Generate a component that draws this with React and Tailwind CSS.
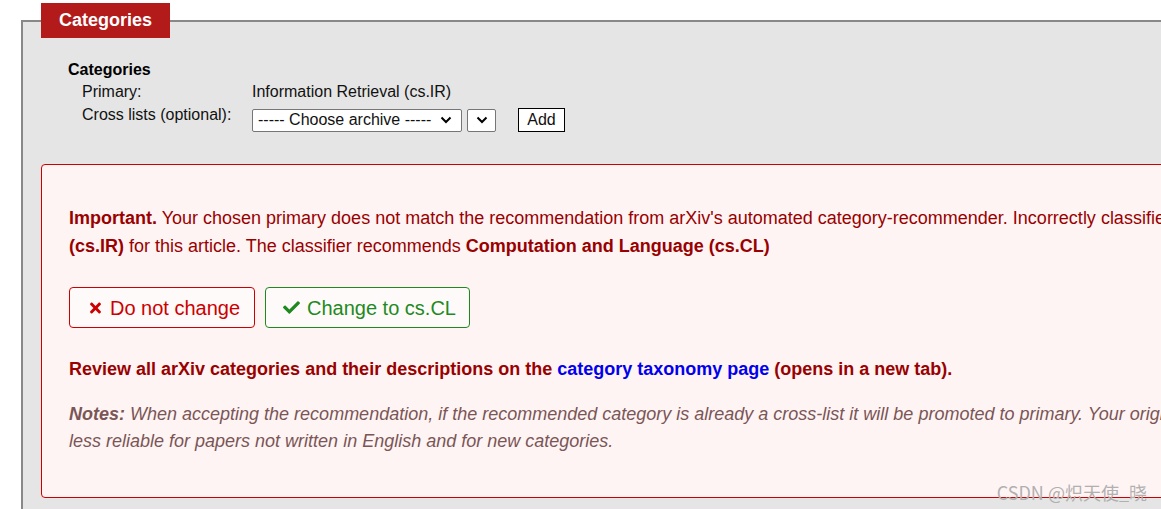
import React from "react";
import { FaTimes, FaCheck } from "react-icons/fa";

function Chevron() {
  return (
    <svg width="12" height="8" viewBox="0 0 12 8" className="shrink-0">
      <path d="M1.5 1.5 L6 6 L10.5 1.5" fill="none" stroke="#000" strokeWidth="2" />
    </svg>
  );
}

export default function App() {
  return (
    <div className="relative w-[1161px] h-[509px] overflow-hidden bg-white font-['Liberation_Sans',Arial,sans-serif] text-black">
      <div className="pl-[21px] pt-[3px]">
        <fieldset className="w-[1220px] h-[560px] border-2 border-[#888] bg-[#e5e5e5] px-[18px]">
          <legend className="ml-0 h-[35px] bg-[#b31b1b] px-[18px] text-[18px] font-bold leading-[35px] text-white">
            Categories
          </legend>

          <div className="pl-[27px] pt-[21px]">
            <div className="text-[16px] font-bold leading-[22px]">Categories</div>
            <div className="pl-[14px] text-[16px] leading-[22px] text-[#111]">
              <div className="flex">
                <div className="w-[170px]">Primary:</div>
                <div>Information Retrieval (cs.IR)</div>
              </div>
              <div className="flex items-start pt-[1px]">
                <div className="w-[170px]">Cross lists (optional):</div>
                <div className="mt-[4px] flex items-center">
                  <div className="flex h-[23px] w-[210px] items-center justify-between rounded-[2px] border border-[#767676] bg-white pl-[5px] pr-[9px] text-[16px] leading-none">
                    <span>----- Choose archive -----</span>
                    <Chevron />
                  </div>
                  <div className="ml-[5px] flex h-[23px] w-[29px] items-center justify-center rounded-[2px] border border-[#767676] bg-white">
                    <Chevron />
                  </div>
                  <button className="ml-[22px] h-[24px] w-[47px] border border-black bg-white text-[16px] leading-none">
                    Add
                  </button>
                </div>
              </div>
            </div>
          </div>

          <div className="mt-[32px] w-[1300px] rounded-[4px] border border-[#cc0000] bg-[#fff4f4] pl-[27px] pt-[39px] pb-[42px]">
            <div className="whitespace-nowrap text-[18px] leading-[28px] text-[#990000]">
              <div>
                <b>Important.</b> Your chosen primary does not match the recommendation from arXiv's automated category-recommender. Incorrectly classified submissions may be reclassified by moderators. You selected <b>Information Retrieval</b>
              </div>
              <div>
                <b>(cs.IR)</b> for this article. The classifier recommends <b>Computation and Language (cs.CL)</b>
              </div>
            </div>

            <div className="mt-[27px] flex gap-[10px]">
              <button className="flex h-[41px] w-[186px] items-center rounded-[4px] border border-[#cc0000] bg-[#fffafa] pl-[18px] text-[20px] leading-none text-[#cc0000]">
                <FaTimes className="mr-[7px] h-[16px] w-[15px]" />
                Do not change
              </button>
              <button className="flex h-[41px] w-[205px] items-center rounded-[4px] border border-[#1e8a1e] bg-[#fffafa] pl-[16px] text-[20px] leading-none text-[#1e8a1e]">
                <FaCheck className="mr-[6px] h-[17px] w-[19px]" />
                Change to cs.CL
              </button>
            </div>

            <div className="mt-[28px] whitespace-nowrap text-[18px] font-bold leading-[27px] text-[#990000]">
              Review all arXiv categories and their descriptions on the{" "}
              <span className="text-[#0000ee]">category taxonomy page</span> (opens in a new tab).
            </div>

            <div className="mt-[18px] whitespace-nowrap text-[18px] italic leading-[27px] text-[#7a5656]">
              <div>
                <b>Notes:</b> When accepting the recommendation, if the recommended category is already a cross-list it will be promoted to primary. Your original primary will become a cross-list.
              </div>
              <div>less reliable for papers not written in English and for new categories.</div>
            </div>
          </div>
        </fieldset>
      </div>

      <div className="absolute bottom-[8px] right-[14px] font-['Noto_Sans_CJK_SC',sans-serif] text-[18px] leading-none text-[#b0b0b0]">
        CSDN @炽天使_晓
      </div>
    </div>
  );
}
